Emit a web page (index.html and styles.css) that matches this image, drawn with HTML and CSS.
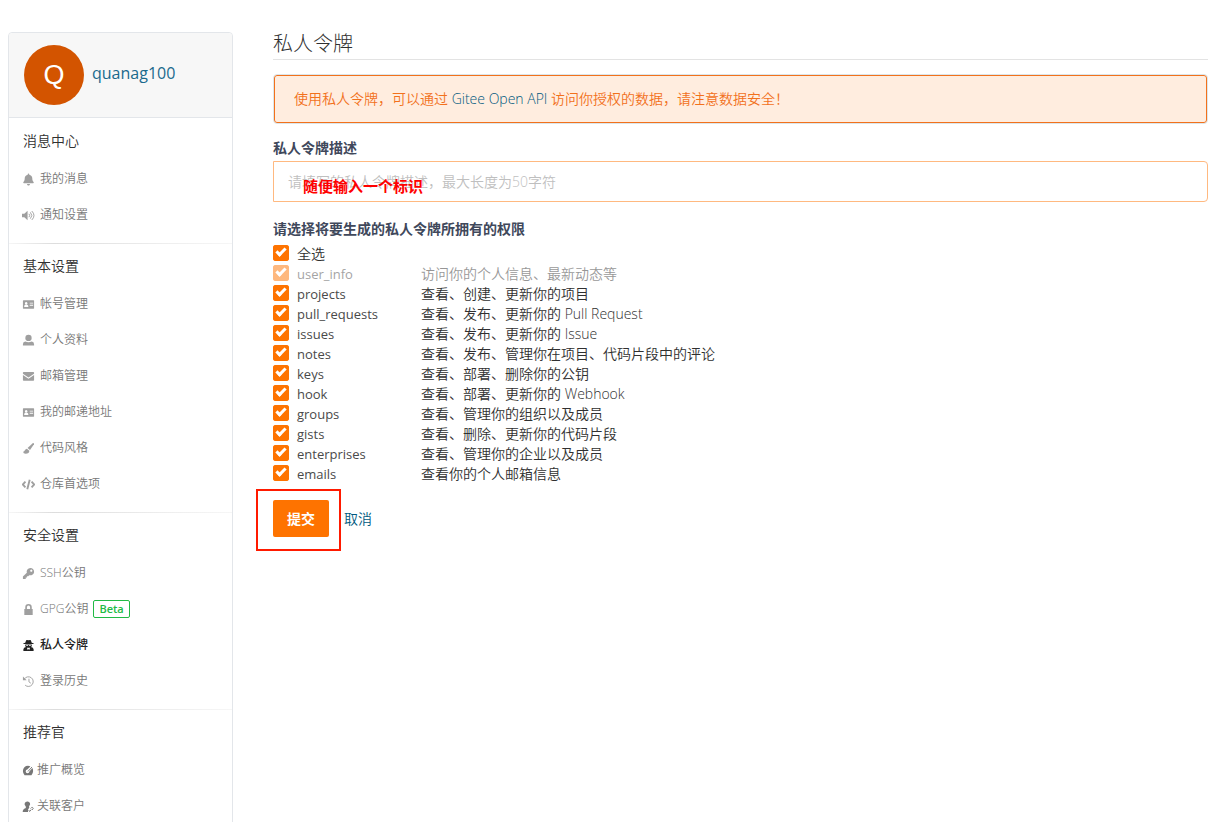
FILE: index.html
```html
<!DOCTYPE html>
<html lang="zh-CN">
<head>
    <meta charset="UTF-8">
    <meta name="viewport" content="width=device-width, initial-scale=1.0">
    <title>私人令牌</title>
    <link rel="stylesheet" href="styles.css">
</head>
<body>
    <div class="page">
        <aside class="sidebar">
            <div class="profile">
                <span class="avatar">Q</span>
                <a class="username" href="#">quanag100</a>
            </div>

            <nav class="menu">
                <section class="menu-group">
                    <h3>消息中心</h3>
                    <a href="#"><svg class="icon" viewBox="-32 -20 512 552"><path d="M224 512c35.32 0 63.97-28.65 63.97-64H160.03c0 35.35 28.65 64 63.97 64zm215.39-149.71c-19.32-20.76-55.47-51.99-55.47-154.29 0-77.7-54.48-139.9-127.94-155.16V32c0-17.67-14.32-32-31.98-32s-31.98 14.33-31.98 32v20.84C118.56 68.1 64.08 130.3 64.08 208c0 102.3-36.15 133.53-55.47 154.29-6 6.45-8.66 14.16-8.61 21.71.11 16.4 12.98 32 32.1 32h383.8c19.12 0 32-15.6 32.1-32 .05-7.55-2.61-15.27-8.61-21.71z"/></svg>我的消息</a>
                    <a href="#"><svg class="icon" viewBox="0 0 14 14"><path d="M0 5h2.5L6 2v10L2.500 9H0z"/><path class="line" d="M7.500 5.200q1.600 1.800 0 3.600M9 3.600q3.200 3.400 0 6.800M10.600 2.200q4.600 4.800 0 9.600"/></svg>通知设置</a>
                </section>

                <section class="menu-group">
                    <h3>基本设置</h3>
                    <a href="#"><svg class="icon" viewBox="0 0 14 14"><path fill-rule="evenodd" d="M1.500 2.500h11q.5 0 .5.5v8q0 .5-.5.5h-11Q1 11.500 1 11V3q0-.5.5-.5zM4.500 4.300a1.400 1.400 0 1 0 .01 0zM2.300 9.600h4.600q0-2-1.400-2.200h-1.800q-1.400.2-1.400 2.200zM8.300 5v1H12V5zM8.300 7.300v1H12v-1z"/></svg>帐号管理</a>
                    <a href="#"><svg class="icon" viewBox="0 0 14 14"><circle cx="7" cy="4.200" r="3.400"/><path d="M1 12.500v-1.500q0-2.500 2.600-2.800 3.400 1.400 6.800 0Q13 8.500 13 11v1.500z"/></svg>个人资料</a>
                    <a href="#"><svg class="icon" viewBox="0 0 14 14"><path d="M1 3q0-.8.8-.8h10.400q.8 0 .8.800v1L7 8 1 4z"/><path d="M1 5.300l6 4 6-4v5.500q0 .8-.8.8H1.800q-.8 0-.8-.8z"/></svg>邮箱管理</a>
                    <a href="#"><svg class="icon" viewBox="0 0 14 14"><path fill-rule="evenodd" d="M1.500 2.500h11q.5 0 .5.5v8q0 .5-.5.5h-11Q1 11.500 1 11V3q0-.5.5-.5zM4.500 4.300a1.400 1.400 0 1 0 .01 0zM2.300 9.600h4.600q0-2-1.400-2.200h-1.800q-1.400.2-1.400 2.200zM8.300 5v1H12V5zM8.300 7.300v1H12v-1z"/></svg>我的邮递地址</a>
                    <a href="#"><svg class="icon" viewBox="0 0 14 14"><path d="M11.800 1q1.500 0 1.100 1.400L8.600 8.600 6 6.500z"/><path d="M5.200 7.200L7.900 9.500q0 3.200-4 3.200Q1.500 12.700 1 10.300q1 .5 1.700-.8.800-2 2.500-2.300z"/></svg>代码风格</a>
                    <a href="#"><svg class="icon" viewBox="0 0 14 14"><path class="line thick" d="M3.700 4L.8 7l2.900 3M10.300 4l2.900 3-2.900 3M8.300 1.800L5.700 12.200"/></svg>仓库首选项</a>
                </section>

                <section class="menu-group">
                    <h3>安全设置</h3>
                    <a href="#"><svg class="icon" viewBox="0 0 14 14"><path fill-rule="evenodd" d="M9 1a4 4 0 1 1-1.200 7.800L6.700 10H5.300v1.400H4v1.400H1v-2.600l4.200-4A4 4 0 0 1 9 1zm1 1.800a1.200 1.200 0 1 0 .01 0z"/></svg>SSH公钥</a>
                    <a href="#"><svg class="icon" viewBox="0 0 14 14"><path fill-rule="evenodd" d="M2.500 6.500H3.500V4.500a3.500 3.500 0 0 1 7 0v2h1V13h-9zM5.300 6.500h3.400V4.500a1.700 1.700 0 0 0-3.400 0z"/></svg>GPG公钥<span class="beta">Beta</span></a>
                    <a class="active" href="#"><svg class="icon" viewBox="0 0 14 14"><path fill-rule="evenodd" d="M3.500 4L4.500 1.300Q5 .6 7 1.300 9 .6 9.500 1.300L10.500 4 12.500 4.600v.8h-11v-.8zM3.500 6h7v1.500q0 .7-.8 1.200 2.600.4 2.800 2.300v2h-11v-2Q1.700 9.100 4.300 8.700 3.500 8.200 3.500 7.500zM4.500 6.600v1h2v-1zM7.500 6.600v1h2v-1zM5.300 9.300L6.300 12.200 7 10.500 7.700 12.200 8.700 9.300z"/></svg>私人令牌</a>
                    <a href="#"><svg class="icon" viewBox="0 0 14 14"><path class="line" d="M2.500 4.300A5.200 5.200 0 1 1 3.400 11M7.500 4v3.400l2 1.400"/><path d="M1 1.700v4h4z"/></svg>登录历史</a>
                </section>

                <section class="menu-group compact">
                    <h3>推荐官</h3>
                    <a href="#"><svg class="icon" viewBox="0 0 12 14"><path fill-rule="evenodd" d="M6 2q1.500 0 2.600.6L5.200 6A2 2 0 1 0 7.500 8.200L10.700 4.200Q11.500 5.500 11.500 7.500 11.500 10 9.700 12H2.300Q.5 10 .5 7.500A5.500 5.500 0 0 1 6 2z"/><path class="line thick" d="M6 8l4.300-4.800"/></svg>推广概览</a>
                    <a href="#"><svg class="icon" viewBox="0 0 12 14"><path d="M5.500 1.500a2.700 2.700 0 0 1 2 4.600Q6.800 7 7.400 8L6 10.500V13H.3q-.2-3 3-4 .8-.8.200-2.300A2.900 2.900 0 0 1 5.500 1.500z"/><path class="line" d="M8.800 9.200L10 8a1.200 1.200 0 0 1 1.500 1.500l-1.300 1.300M9.500 10.300L8 12.200a1 1 0 0 1-1-1.200"/></svg>关联客户</a>
                </section>
            </nav>
        </aside>

        <main class="content">
            <h2>私人令牌</h2>

            <div class="notice">使用私人令牌，可以通过 <a href="#">Gitee Open API</a> 访问你授权的数据，请注意数据安全！</div>

            <form>
                <label class="field-label" for="description">私人令牌描述</label>
                <div class="field">
                    <input type="text" id="description" placeholder="请填写的私人令牌描述，最大长度为50字符">
                    <span class="hint">随便输入一个标识</span>
                </div>

                <fieldset class="scopes">
                    <legend class="field-label">请选择将要生成的私人令牌所拥有的权限</legend>
                    <label class="scope"><input type="checkbox" id="checkAll" checked><span>全选</span></label>
                    <label class="scope disabled"><input type="checkbox" checked disabled><span class="name">user_info</span><span>访问你的个人信息、最新动态等</span></label>
                    <label class="scope"><input type="checkbox" checked><span class="name">projects</span><span>查看、创建、更新你的项目</span></label>
                    <label class="scope"><input type="checkbox" checked><span class="name">pull_requests</span><span>查看、发布、更新你的 Pull Request</span></label>
                    <label class="scope"><input type="checkbox" checked><span class="name">issues</span><span>查看、发布、更新你的 Issue</span></label>
                    <label class="scope"><input type="checkbox" checked><span class="name">notes</span><span>查看、发布、管理你在项目、代码片段中的评论</span></label>
                    <label class="scope"><input type="checkbox" checked><span class="name">keys</span><span>查看、部署、删除你的公钥</span></label>
                    <label class="scope"><input type="checkbox" checked><span class="name">hook</span><span>查看、部署、更新你的 Webhook</span></label>
                    <label class="scope"><input type="checkbox" checked><span class="name">groups</span><span>查看、管理你的组织以及成员</span></label>
                    <label class="scope"><input type="checkbox" checked><span class="name">gists</span><span>查看、删除、更新你的代码片段</span></label>
                    <label class="scope"><input type="checkbox" checked><span class="name">enterprises</span><span>查看、管理你的企业以及成员</span></label>
                    <label class="scope"><input type="checkbox" checked><span class="name">emails</span><span>查看你的个人邮箱信息</span></label>
                </fieldset>

                <div class="actions">
                    <div class="highlight"><button type="submit">提交</button></div>
                    <a href="#">取消</a>
                </div>
            </form>
        </main>
    </div>

    <script>
// Select all toggles every scope that can be changed
document.getElementById('checkAll').addEventListener('change', (e) => {
    document.querySelectorAll('.scope input:not(:disabled)').forEach((box) => {
        box.checked = e.target.checked;
    });
});
    </script>
</body>
</html>
```
FILE: styles.css
```css
:root {
    --orange: #fe7300;
    --link: #005980;
    --border: #e3e6ea;
    --text: #40485b;
}

*,
*::after {
    box-sizing: border-box;
}

body {
    margin: 0;
    background: #fff;
    color: #303030;
    font: 350 14px/20px "Open Sans", "Noto Sans CJK SC", sans-serif;
}

a {
    color: var(--link);
    text-decoration: none;
}

.page {
    display: flex;
    align-items: flex-start;
    gap: 40px;
    padding: 32px 23px 0 8px;
}

/* Sidebar */
.sidebar {
    flex: 0 0 225px;
    border: 1px solid var(--border);
    border-radius: 4px;
}

.profile {
    display: flex;
    align-items: center;
    gap: 8px;
    padding: 12px 15px;
    background: #f7f7f7;
    border-bottom: 1px solid var(--border);
    border-radius: 4px 4px 0 0;
}

.avatar {
    width: 60px;
    height: 60px;
    border-radius: 50%;
    background: #d35400;
    color: #fff;
    font-family: "Liberation Sans", sans-serif;
    font-size: 27px;
    font-weight: 400;
    line-height: 60px;
    text-align: center;
}

.username {
    padding-bottom: 4px;
    color: #1a6a8d;
    font-size: 16px;
    font-weight: 400;
}

.menu-group {
    padding: 4px 13px 10px;
}

.menu-group + .menu-group {
    background: linear-gradient(to right, #f6f6f6, #ddd 20%, #eee 70%, #f6f6f6) top / 100% 1px no-repeat;
}

.menu-group h3 {
    margin: 0 0 2px;
    padding-left: 1px;
    font-size: 14px;
    font-weight: 350;
    line-height: 37px;
}

.menu-group a {
    display: flex;
    align-items: center;
    gap: 5px;
    height: 36px;
    color: #777;
    font-size: 12px;
}

.menu-group a.active {
    color: #222;
    font-weight: 500;
}

.icon {
    width: 13px;
    height: 13px;
    fill: currentColor;
    opacity: 0.7;
}

.active .icon,
.compact .icon {
    opacity: 1;
}

.compact a {
    gap: 3px;
}

.compact .icon {
    width: 12px;
}

.line {
    fill: none;
    stroke: currentColor;
}

.line.thick {
    stroke-width: 2;
}

.compact .line.thick {
    stroke-width: 1;
}

.beta {
    padding: 0 5px;
    border: 1px solid #21ba45;
    border-radius: 2px;
    color: #21ba45;
    font-size: 11px;
    font-weight: 600;
    line-height: 16px;
}

/* Content */
.content {
    flex: 1;
    min-width: 0;
}

.content h2 {
    margin: 0 0 14px;
    padding-bottom: 3px;
    border-bottom: 1px solid #e3e3e3;
    font-size: 20px;
    font-weight: 300;
    line-height: 24px;
}

.notice {
    margin-bottom: 14px;
    padding: 14px 20px;
    border: 1px solid #dce6ea;
    border-radius: 4px;
    box-shadow: inset 0 0 0 1px #f2711c;
    background: #ffeddf;
    color: #f2711c;
}

.field-label {
    display: block;
    padding: 0;
    color: var(--text);
    font-weight: 700;
}

.field {
    position: relative;
    margin: 3px 0 17px;
}

.field input {
    display: block;
    width: 100%;
    height: 41px;
    padding: 0 14px;
    border: 1px solid #ffb980;
    border-radius: 0 4px 4px 0;
    font: inherit;
}

.field input::placeholder {
    color: #bfbfbf;
}

.hint {
    position: absolute;
    top: 15px;
    left: 30px;
    color: #f00;
    font-size: 15px;
    font-weight: 700;
}

.scopes {
    margin: 0;
    padding: 0;
    border: 0;
}

.scopes legend {
    margin-bottom: 5px;
}

.scope {
    display: grid;
    grid-template-columns: 16px 116px auto;
    justify-content: start;
    gap: 8px;
}

.scope .name {
    color: #4a4a4a;
    font-size: 13px;
    font-weight: 400;
}

.scope input {
    appearance: none;
    position: relative;
    width: 16px;
    height: 16px;
    margin: 1px 0;
    border-radius: 3px;
    box-shadow: inset 0 0 0 1px var(--orange);
}

.scope input:checked {
    background: var(--orange);
}

.scope input:checked::after {
    content: "";
    position: absolute;
    top: 3px;
    left: 3px;
    width: 10px;
    height: 6px;
    border: solid #fff;
    border-width: 0 0 3px 3px;
    transform: rotate(-45deg);
}

.scope.disabled {
    opacity: 0.5;
}

.actions {
    display: flex;
    align-items: center;
    gap: 15px;
    margin-top: 16px;
}

.highlight {
    position: relative;
}

.highlight::after {
    content: "";
    position: absolute;
    inset: -11px -12px -14px -17px;
    border: 2px solid #ff1a00;
    pointer-events: none;
}

.actions button {
    display: block;
    width: 56px;
    height: 37px;
    padding: 0;
    border: 0;
    border-radius: 2px;
    background: var(--orange);
    color: #fff;
    font: inherit;
    font-weight: 700;
    cursor: pointer;
}
```
